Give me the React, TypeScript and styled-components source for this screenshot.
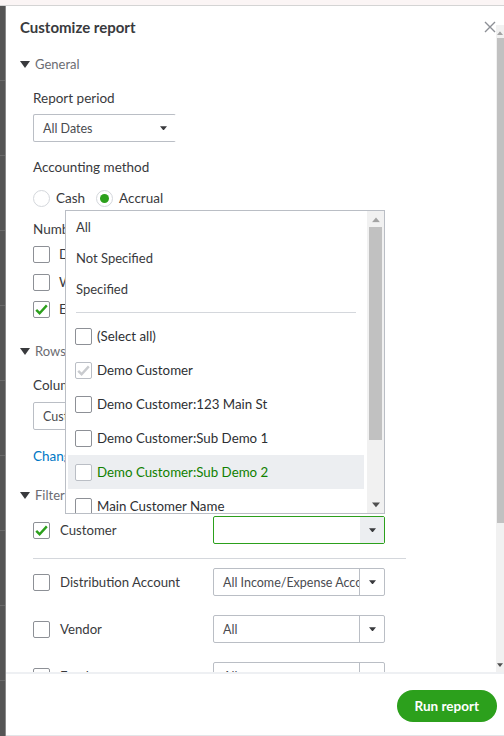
import React from "react";
import styled, { createGlobalStyle } from "styled-components";

const GlobalStyle = createGlobalStyle`
  html, body {
    margin: 0;
    padding: 0;
  }
  body {
    font-family: Lato, "Open Sans", "Liberation Sans", sans-serif;
    color: #393a3d;
  }
`;

const Page = styled.div`
  width: 504px;
  height: 736px;
  display: flex;
  flex-direction: column;
  overflow: hidden;
  background: #525252;
`;

const TopStrip = styled.div`
  height: 5px;
  background: #fbf5f5;
  border-bottom: 1px solid #d4d4d4;
`;

const Row = styled.div`
  flex: 1;
  display: flex;
  min-height: 0;
`;

const Backdrop = styled.div`
  width: 5px;
  border-right: 1px solid #8a8a8a;
  background: repeating-linear-gradient(
    to bottom,
    #555 0px,
    #555 74px,
    #6a6a6a 74px,
    #6a6a6a 75px
  );
`;

const Modal = styled.div`
  flex: 1;
  display: flex;
  flex-direction: column;
  background: #fff;
  position: relative;
  min-width: 0;
`;

const ScrollArea = styled.div`
  flex: 1;
  position: relative;
  overflow: hidden;
`;

const Content = styled.div`
  position: relative;
  padding: 11px 0 0 14px;
`;

const Title = styled.h2`
  margin: 0;
  font-size: 15px;
  line-height: 20px;
  font-weight: 700;
  color: #393a3d;
`;

const Close = styled.button`
  position: absolute;
  top: 15px;
  right: 8px;
  width: 12px;
  height: 12px;
  padding: 0;
  border: 0;
  background: none;
  display: flex;
`;

const Section = styled.div<{ $gap: number }>`
  margin-top: ${(p) => p.$gap}px;
  display: flex;
  align-items: center;
  gap: 5px;
  height: 20px;
  font-size: 13px;
  color: #6b6c72;
`;

const Inner = styled.div`
  padding-left: 13px;
  display: flex;
  flex-direction: column;
`;

const Label = styled.div<{ $gap: number }>`
  margin-top: ${(p) => p.$gap}px;
  height: 20px;
  line-height: 20px;
  font-size: 13.5px;
  color: #393a3d;
  white-space: nowrap;
`;

const Select = styled.div<{
  $gap?: number;
  $width: number;
  $focus?: boolean;
  $open?: boolean;
}>`
  margin-top: ${(p) => p.$gap ?? 0}px;
  width: ${(p) => p.$width}px;
  height: 28px;
  box-sizing: border-box;
  display: flex;
  border: 1px solid ${(p) => (p.$focus ? "#2ca01c" : "#babec5")};
  border-right-color: ${(p) => (p.$open ? "transparent" : p.$focus ? "#2ca01c" : "#babec5")};
  border-radius: 2px;
  background: #fff;
  font-size: 12.5px;
  color: #4a4b50;
  flex-shrink: 0;
`;

const SelectValue = styled.div`
  flex: 1;
  min-width: 0;
  padding: 0 6px 0 9px;
  display: flex;
  align-items: center;
  white-space: nowrap;
  overflow: hidden;
`;

const SelectArrow = styled.div<{ $divider?: boolean; $shade?: boolean }>`
  width: 24px;
  display: flex;
  align-items: center;
  justify-content: center;
  border-left: ${(p) => (p.$divider ? "1px solid #babec5" : "0")};
  background: ${(p) => (p.$shade ? "#eceef1" : "transparent")};
`;

const Caret = ({ size = 7, color = "#393a3d" }: { size?: number; color?: string }) => (
  <svg width={size} height={size * 0.7} viewBox="0 0 10 7">
    <path d="M0 0.5 L10 0.5 L5 6.5 Z" fill={color} />
  </svg>
);

const RadioRow = styled.div`
  margin-top: 11px;
  height: 20px;
  display: flex;
  align-items: center;
  font-size: 13.5px;
`;

const Radio = styled.span<{ $on?: boolean }>`
  width: 17px;
  height: 17px;
  box-sizing: border-box;
  border-radius: 50%;
  border: 1px solid #d4d7dc;
  margin-right: 6px;
  display: flex;
  align-items: center;
  justify-content: center;
  &::after {
    content: "";
    width: 9px;
    height: 9px;
    border-radius: 50%;
    background: ${(p) => (p.$on ? "#2ca01c" : "transparent")};
  }
`;

const RadioText = styled.span`
  margin-right: 11px;
`;

const CheckRow = styled.div<{ $gap: number }>`
  margin-top: ${(p) => p.$gap}px;
  height: 20px;
  display: flex;
  align-items: center;
  gap: 9px;
  font-size: 13.5px;
  white-space: nowrap;
`;

const Box = styled.span<{ $muted?: boolean }>`
  width: 17px;
  height: 17px;
  box-sizing: border-box;
  border: 1px solid ${(p) => (p.$muted ? "#babec5" : "#8d9096")};
  border-radius: 2px;
  background: #fff;
  display: flex;
  align-items: center;
  justify-content: center;
  flex-shrink: 0;
`;

const Tick = ({ color }: { color: string }) => (
  <svg width="13" height="11" viewBox="0 0 13 11">
    <path d="M1.2 5.8 L4.6 9.2 L11.8 1.4" fill="none" stroke={color} strokeWidth="2.4" />
  </svg>
);

const Check = ({ on, muted }: { on?: boolean; muted?: boolean }) => (
  <Box $muted={muted}>{on ? <Tick color={muted ? "#c9cbcf" : "#2ca01c"} /> : null}</Box>
);

const Link = styled.div`
  margin-top: 16px;
  height: 20px;
  line-height: 20px;
  font-size: 13.5px;
  color: #0077c5;
`;

const FilterRow = styled.div<{ $gap: number }>`
  margin-top: ${(p) => p.$gap}px;
  display: flex;
  align-items: center;
  height: 28px;
`;

const FilterLabel = styled.div`
  width: 153px;
  margin-left: 10px;
  font-size: 13.2px;
  white-space: nowrap;
`;

const Divider = styled.div`
  margin-top: 14px;
  width: 373px;
  height: 1px;
  background: #d4d7dc;
`;

const Popup = styled.div`
  position: absolute;
  top: 204px;
  left: 59px;
  width: 320px;
  height: 304px;
  box-sizing: border-box;
  border: 1px solid #babec5;
  background: #fff;
  display: flex;
  overflow: hidden;
`;

const PopupList = styled.div`
  flex: 1;
  padding: 1px 3px 0 2px;
  display: flex;
  flex-direction: column;
`;

const Option = styled.div`
  height: 31px;
  line-height: 31px;
  padding-left: 8px;
  font-size: 13px;
  color: #393a3d;
  flex-shrink: 0;
`;

const OptionDivider = styled.div`
  margin: 7px 8px 6px 8px;
  height: 1px;
  background: #d4d7dc;
  flex-shrink: 0;
`;

const CheckOption = styled.div<{ $hover?: boolean }>`
  height: 34px;
  display: flex;
  align-items: center;
  gap: 5px;
  padding-left: 7px;
  font-size: 13.3px;
  color: ${(p) => (p.$hover ? "#108000" : "#2d2f33")};
  background: ${(p) => (p.$hover ? "#eceef1" : "transparent")};
  flex-shrink: 0;
  white-space: nowrap;
`;

const Scrollbar = styled.div<{ $width: number }>`
  width: ${(p) => p.$width}px;
  background: #f1f1f1;
  display: flex;
  flex-direction: column;
  align-items: center;
  flex-shrink: 0;
`;

const ScrollThumb = styled.div<{ $top: number; $height: number; $width: number }>`
  margin-top: ${(p) => p.$top}px;
  width: ${(p) => p.$width}px;
  height: ${(p) => p.$height}px;
  background: #c1c1c1;
`;

const ScrollArrow = styled.div<{ $up?: boolean }>`
  margin-top: ${(p) => (p.$up ? "6px" : "auto")};
  margin-bottom: ${(p) => (p.$up ? "0" : "5px")};
  transform: ${(p) => (p.$up ? "rotate(180deg)" : "none")};
  display: flex;
`;

const MainScroll = styled.div`
  position: absolute;
  top: 19px;
  right: 0;
  bottom: 0;
  display: flex;
`;

const Footer = styled.div`
  height: 61px;
  border-top: 2px solid #eef0f3;
  border-bottom: 1px solid #e3e5e8;
  display: flex;
  align-items: center;
  justify-content: flex-end;
  padding-right: 7px;
`;

const RunButton = styled.button`
  height: 32px;
  padding: 0 18px;
  border: 0;
  border-radius: 16px;
  background: #2ca01c;
  color: #fff;
  font-family: inherit;
  font-size: 13.5px;
  font-weight: 700;
  margin-top: 2px;
`;

const customers = [
  { name: "Demo Customer", on: true, muted: true },
  { name: "Demo Customer:123 Main St" },
  { name: "Demo Customer:Sub Demo 1" },
  { name: "Demo Customer:Sub Demo 2", hover: true },
  { name: "Main Customer Name" },
];

const Triangle = () => (
  <svg width="10" height="7" viewBox="0 0 10 7">
    <path d="M0 0 L10 0 L5 7 Z" fill="#393a3d" />
  </svg>
);

export default function App() {
  return (
    <Page>
      <GlobalStyle />
      <TopStrip />
      <Row>
        <Backdrop />
        <Modal>
          <ScrollArea>
            <Content>
              <Title>Customize report</Title>

              <Section $gap={17}>
                <Triangle />
                General
              </Section>
              <Inner>
                <Label $gap={14}>Report period</Label>
                <Select $gap={6} $width={143} $open>
                  <SelectValue>All Dates</SelectValue>
                  <SelectArrow>
                    <Caret />
                  </SelectArrow>
                </Select>

                <Label $gap={15}>Accounting method</Label>
                <RadioRow>
                  <Radio />
                  <RadioText>Cash</RadioText>
                  <Radio $on />
                  <RadioText>Accrual</RadioText>
                </RadioRow>

                <Label $gap={11}>Number format</Label>
                <CheckRow $gap={5}>
                  <Check />
                  Divide by 1000
                </CheckRow>
                <CheckRow $gap={8}>
                  <Check />
                  Without cents
                </CheckRow>
                <CheckRow $gap={7}>
                  <Check on />
                  Except zero amount
                </CheckRow>
              </Inner>

              <Section $gap={22}>
                <Triangle />
                Rows/Columns
              </Section>
              <Inner>
                <Label $gap={14}>Columns</Label>
                <Select $gap={7} $width={171}>
                  <SelectValue>Customers</SelectValue>
                  <SelectArrow $divider>
                    <Caret />
                  </SelectArrow>
                </Select>
                <Link>Change columns</Link>
              </Inner>

              <Section $gap={19}>
                <Triangle />
                Filter
              </Section>
              <Inner>
                <FilterRow $gap={11}>
                  <Check on />
                  <FilterLabel>Customer</FilterLabel>
                  <Select $width={172} $focus>
                    <SelectValue />
                    <SelectArrow $shade>
                      <Caret />
                    </SelectArrow>
                  </Select>
                </FilterRow>
                <Divider />
                <FilterRow $gap={9}>
                  <Check />
                  <FilterLabel>Distribution Account</FilterLabel>
                  <Select $width={172}>
                    <SelectValue>All Income/Expense Accounts</SelectValue>
                    <SelectArrow $divider>
                      <Caret />
                    </SelectArrow>
                  </Select>
                </FilterRow>
                <FilterRow $gap={19}>
                  <Check />
                  <FilterLabel>Vendor</FilterLabel>
                  <Select $width={172}>
                    <SelectValue>All</SelectValue>
                    <SelectArrow $divider>
                      <Caret />
                    </SelectArrow>
                  </Select>
                </FilterRow>
                <FilterRow $gap={19}>
                  <Check />
                  <FilterLabel>Employee</FilterLabel>
                  <Select $width={172}>
                    <SelectValue>All</SelectValue>
                    <SelectArrow $divider>
                      <Caret />
                    </SelectArrow>
                  </Select>
                </FilterRow>
              </Inner>

              <Popup>
                <PopupList>
                  <Option>All</Option>
                  <Option>Not Specified</Option>
                  <Option>Specified</Option>
                  <OptionDivider />
                  <CheckOption>
                    <Check />
                    (Select all)
                  </CheckOption>
                  {customers.map((c) => (
                    <CheckOption key={c.name} $hover={c.hover}>
                      <Check on={c.on} muted={c.muted || c.hover} />
                      {c.name}
                    </CheckOption>
                  ))}
                </PopupList>
                <Scrollbar $width={17}>
                  <ScrollArrow $up>
                    <Caret size={8} color="#a3a3a3" />
                  </ScrollArrow>
                  <ScrollThumb $top={4} $height={213} $width={13} />
                  <ScrollArrow>
                    <Caret size={8} color="#505050" />
                  </ScrollArrow>
                </Scrollbar>
              </Popup>
            </Content>

            <Close aria-label="Close">
              <svg width="12" height="12" viewBox="0 0 12 12">
                <path d="M1 1 L11 11 M11 1 L1 11" stroke="#8d9096" strokeWidth="1.4" />
              </svg>
            </Close>

            <MainScroll>
              <Scrollbar $width={8}>
                <ScrollArrow $up>
                  <Caret size={6} color="#a3a3a3" />
                </ScrollArrow>
                <ScrollThumb $top={3} $height={485} $width={7} />
                <ScrollArrow>
                  <Caret size={6} color="#505050" />
                </ScrollArrow>
              </Scrollbar>
            </MainScroll>
          </ScrollArea>
          <Footer>
            <RunButton>Run report</RunButton>
          </Footer>
        </Modal>
      </Row>
    </Page>
  );
}
